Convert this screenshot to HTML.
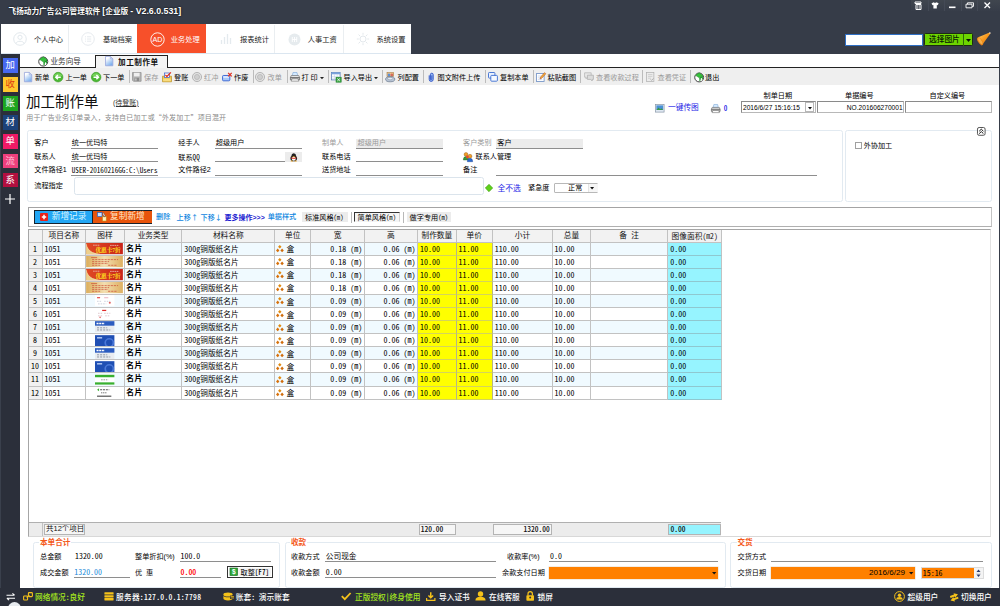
<!DOCTYPE html>
<html lang="zh-CN">
<head>
<meta charset="utf-8">
<title>飞扬动力广告公司管理软件</title>
<style>
html,body{margin:0;padding:0;}
body{width:1000px;height:606px;position:relative;overflow:hidden;background:#fff;
 font-family:"Liberation Sans","Noto Sans CJK SC",sans-serif;font-size:7px;line-height:9px;color:#111;}
.a{position:absolute;white-space:nowrap;}
.t{position:absolute;white-space:nowrap;font-size:7.15px;line-height:9px;color:#000;}
.b{font-weight:bold;}
.md{font-weight:400;}
.sb5{font-weight:500;}
.gray{color:#9a9a9a;}
.blue{color:#1a1ae6;}
.m{font-family:"Noto Sans CJK SC","Liberation Mono",monospace;font-feature-settings:"hwid";font-weight:500;}
.cj{font-family:"Noto Sans CJK SC",sans-serif;}
.ul{position:absolute;height:1px;background:#a4a4a4;}
svg{position:absolute;overflow:visible;}
#titlebar{left:0;top:0;width:1000px;height:54px;background:#363c48;}
#title{left:8.5px;top:5.4px;color:#fff;font-weight:bold;font-size:7.65px;line-height:12px;text-shadow:0 0 2px #000;}
#nav{left:1px;top:24px;width:410px;height:30px;background:#fff;}
.tl{font-size:8.8px;}
.nt{position:absolute;top:0;height:30px;font-size:7.25px;line-height:32.6px;color:#222;}
.nt span{position:absolute;left:33px;top:0;white-space:nowrap;}
.nsep{position:absolute;top:1px;width:1px;height:28px;background:#eaeef1;}
#side{left:0;top:53.5px;width:19.8px;height:536px;background:#2b2f3a;border-left:1px solid #3a404c;box-sizing:border-box;}
.sb{position:absolute;left:2px;width:14.5px;height:14.6px;color:#fff;font-size:9.4px;line-height:14px;text-align:center;}
#status{left:0;top:587.5px;width:1000px;height:19px;background:#2b2f3a;}
.st{font-family:"Noto Sans CJK SC","Liberation Sans",sans-serif;font-feature-settings:"hwid";position:absolute;white-space:nowrap;top:591.8px;font-size:7.7px;line-height:9px;letter-spacing:0;color:#fff;font-weight:500;}
.y{color:#a4e61e !important;}
#tabstrip{left:20px;top:54px;width:980px;height:13px;background:#fff;}
#tabline{left:20px;top:67px;width:980px;height:1px;background:#222;}
#toolbar{left:20px;top:68px;width:980px;height:16.6px;background:#efefef;}
.panel{position:absolute;border:1px solid #e2eaf1;border-radius:2.5px;background:#fff;box-sizing:border-box;}
.box{position:absolute;box-sizing:border-box;border:1px solid #8a8a8a;border-right-color:#b8b8b8;border-bottom-color:#b8b8b8;background:#fff;}
.lg{position:absolute;font-size:7.6px;line-height:9px;font-weight:bold;color:#f4581a;background:#fff;padding:0 1px;white-space:nowrap;}
#grid{left:27.5px;top:228.8px;width:963.8px;height:308px;border:1px solid #a6a6a6;border-right-color:#e2e2e2;border-bottom-color:#d8d8d8;box-sizing:border-box;background:#fff;}
.gh{position:absolute;top:0;height:12.2px;box-sizing:border-box;border-right:1px solid #c2c2c2;border-bottom:1px solid #c2c2c2;background:#f2f2f2;text-align:center;font-size:7.7px;line-height:12.4px;font-weight:400;letter-spacing:0;color:#111;white-space:nowrap;overflow:hidden;}
.c{position:absolute;box-sizing:border-box;border-right:1px solid #c2c2c2;border-bottom:1px solid #c2c2c2;font-size:7.7px;line-height:11px;white-space:nowrap;overflow:hidden;padding-left:1.8px;color:#000;background:#fff;}
.alt{background:#f0faff;}
.yl{background:#ffff00;border-bottom-color:#d4d45c !important;border-right-color:#b4b48a !important;}
.cy{background:#96f4ff;border-bottom-color:#8fc8d0 !important;}
.rn{background:#f1f1f1;text-align:center;padding-left:0;}
.c.m{font-weight:400;font-size:8px;}
.c .m{font-weight:400;font-size:8px;}
.r{text-align:right;padding-right:1.5px;}
</style>
</head>
<body>
<div class="a" id="titlebar"></div>
<div class="a" id="title">飞扬动力广告公司管理软件 <span class="tl">[</span>企业版 <span class="tl">- V2.6.0.531]</span></div>
<div class="a" id="nav">
 <div class="nt" style="left:0;width:67px"><svg style="left:12px;top:8px" width="14" height="14" viewBox="0 0 14 14"><circle cx="7" cy="7" r="6.3" fill="none" stroke="#dfe5ea" stroke-width="0.9"/><circle cx="7" cy="5.3" r="2.1" fill="none" stroke="#dfe5ea" stroke-width="0.9"/><path d="M3 11.5 C3.5 8.5 10.5 8.5 11 11.5" fill="none" stroke="#dfe5ea" stroke-width="0.9"/></svg><span>个人中心</span></div>
 <div class="nsep" style="left:67px"></div>
 <div class="nt" style="left:68px;width:68px"><svg style="left:12px;top:8px" width="14" height="14" viewBox="0 0 14 14"><circle cx="7" cy="7" r="6.3" fill="none" stroke="#e3e8ec" stroke-width="0.9"/><path d="M4 4.8h1M6 4.8h4.2M4 7h1M6 7h4.2M4 9.2h1M6 9.2h4.2" stroke="#e3e8ec" stroke-width="0.9"/></svg><span style="left:34px">基础档案</span></div>
 <div class="nt" style="left:136.2px;width:68.8px;background:#f7502a;color:#fff"><svg style="left:12.5px;top:7.5px" width="15" height="15" viewBox="0 0 15 15"><circle cx="7.5" cy="7.5" r="6.7" fill="none" stroke="#fff" stroke-width="0.9"/><text x="7.5" y="10.1" font-size="7.2" fill="#fff" text-anchor="middle" font-family="Liberation Sans, sans-serif">AD</text></svg><span style="left:33.5px">业务处理</span></div>
 <div class="nt" style="left:205px;width:68px"><svg style="left:14px;top:9px" width="12" height="12" viewBox="0 0 12 12"><path d="M1.5 11V7M4.5 11V4M7.5 11V1M10.5 11V5" stroke="#e4eaee" stroke-width="1.3"/></svg><span style="left:34px">报表统计</span></div>
 <div class="nsep" style="left:273px"></div>
 <div class="nt" style="left:274px;width:68px"><svg style="left:13px;top:8.5px" width="13" height="13" viewBox="0 0 13 13"><circle cx="6.5" cy="6.5" r="6" fill="#e6ebee"/><path d="M4.3 4v5M6.5 4v5M8.7 4v5M4.3 6.5h4.4" stroke="#fff" stroke-width="0.9"/></svg><span style="left:32.8px">人事工资</span></div>
 <div class="nsep" style="left:341.5px"></div>
 <div class="nt" style="left:342px;width:68px"><svg style="left:13px;top:8px" width="14" height="14" viewBox="0 0 14 14"><circle cx="7" cy="7" r="3" fill="none" stroke="#e3e8ec" stroke-width="1"/><path d="M7 0.8v2M7 11.2v2M0.8 7h2M11.2 7h2M2.6 2.6l1.4 1.4M10 10l1.4 1.4M2.6 11.4l1.4-1.4M10 4l1.4-1.4" stroke="#e3e8ec" stroke-width="1"/></svg><span style="left:33.4px">系统设置</span></div>
 <div class="a" style="left:0;top:29px;width:410px;height:1px;background:#dbe6f0"></div>
</div>
<div class="a" style="left:911px;top:0;width:89px;height:10.5px;background:linear-gradient(#40464f,#373d49)"></div><div class="a" style="left:927.6px;top:0;width:1px;height:10.5px;background:#444a56"></div><div class="a" style="left:944.2px;top:0;width:1px;height:10.5px;background:#444a56"></div><div class="a" style="left:960.8px;top:0;width:1px;height:10.5px;background:#444a56"></div><div class="a" style="left:977.4px;top:0;width:1px;height:10.5px;background:#444a56"></div>
<svg style="left:914px;top:1px" width="80" height="10" viewBox="0 0 80 10">
 <path d="M1 1h6v1.5h-6zM2 3.5h5v5h-5z" fill="none" stroke="#fff" stroke-width="1"/><path d="M3.7 4v4M5.3 4v4" stroke="#fff" stroke-width="0.6"/>
 <path d="M17.5 2.5l2-1.2q1.6 1 3.2 0l2 1.2l-1.1 1.8l-0.8-0.4v3.6h-3.4v-3.6l-0.8 0.4z" fill="#fff"/>
 <rect x="35" y="5.5" width="6.5" height="1.6" fill="#fff"/>
 <path d="M52 3.2h6v3.6h-6zM53.5 3.2v-1.4h6v3.6h-1.5" fill="none" stroke="#fff" stroke-width="0.9"/>
 <path d="M70.5 1.5l5.5 5.5M76 1.5l-5.5 5.5" stroke="#fff" stroke-width="1.3"/>
</svg>
<div class="a" style="left:844.5px;top:33.7px;width:78.2px;height:12.4px;background:#fff;border:1px solid #2f6fc4;box-sizing:border-box"></div>
<div class="a" style="left:923.6px;top:33.2px;width:49.6px;height:13.2px;background:#6dd400;border:1px solid #1c2a14;border-radius:1.5px;box-sizing:border-box"></div>
<div class="a" style="left:963.3px;top:34px;width:1px;height:11.6px;background:#2f6a08"></div>
<div class="t" style="left:929px;top:34.5px;font-size:7.7px;font-weight:500;color:#061606">选择图片</div>
<svg style="left:966px;top:38.5px" width="5" height="3" viewBox="0 0 5 3"><path d="M0 0h5l-2.5 3z" fill="#0a140a"/></svg>
<svg style="left:976px;top:31px" width="16" height="16" viewBox="0 0 16 16"><defs><linearGradient id="cg" x1="0" y1="0" x2="1" y2="1"><stop offset="0" stop-color="#ffd070"/><stop offset="0.5" stop-color="#f8981c"/><stop offset="1" stop-color="#d86a0c"/></linearGradient></defs><path d="M13.6 1.4L2.2 6.2Q1 10.5 5.8 14.4L14.4 2.6Q14.4 1.6 13.6 1.4z" fill="url(#cg)"/><ellipse cx="4.1" cy="10.2" rx="2.1" ry="4.5" transform="rotate(-32 4.1 10.2)" fill="#e8841a"/><ellipse cx="4.3" cy="10.1" rx="1.3" ry="3.4" transform="rotate(-32 4.3 10.1)" fill="#f8b048"/><circle cx="13.9" cy="2" r="0.8" fill="#e8e0d8"/></svg>
<div class="a" id="side">
 <div class="sb" style="top:4.5px;background:#4668f0">加</div>
 <div class="sb" style="top:23.5px;background:#ffc82e;color:#e03a12">收</div>
 <div class="sb" style="top:42.7px;background:#1da51f">账</div>
 <div class="sb" style="top:61.8px;background:#1c4279">材</div>
 <div class="sb" style="top:80.9px;background:#f01a66">单</div>
 <div class="sb" style="top:100px;background:#ee3f7d;color:#ffc4da">流</div>
 <div class="sb" style="top:119.1px;background:#b20f3f">系</div>
 <svg style="left:4px;top:140.5px" width="10" height="10" viewBox="0 0 9 9"><path d="M4.5 0v9M0 4.5h9" stroke="#fff" stroke-width="1.1"/></svg>
</div>
<div class="a" id="tabstrip"></div>
<div class="a" id="tabline"></div>
<svg style="left:37.5px;top:55.5px" width="10.5" height="10.5" viewBox="0 0 10 10"><circle cx="5" cy="5.3" r="4.3" fill="#fff" stroke="#333" stroke-width="0.9"/><path d="M1.5 3.2L5 0.8l3.6 2.6l-3.4 2.3z" fill="#35c23a" stroke="#1c7c22" stroke-width="0.5"/><path d="M5.2 5.7l3.4-2.3v3.4l-3.4 2.2z" fill="#1d9a28"/><path d="M6.5 9V6.4l1.2-0.8V8.3z" fill="#fff"/></svg><div class="t" style="left:50.5px;top:57px;font-size:7.6px;line-height:10px;color:#333">业务向导</div>
<div class="a" style="left:94.5px;top:54.5px;width:73px;height:14px;background:#f4f4f4;border:1px solid #222;border-bottom:none;box-sizing:border-box"></div>
<svg style="left:104.5px;top:56.2px" width="8.4" height="10.2" viewBox="0 0 8 10"><defs><linearGradient id="dg" x1="0" y1="0" x2="0.6" y2="1"><stop offset="0.25" stop-color="#ffffff"/><stop offset="1" stop-color="#7db0ee"/></linearGradient></defs><path d="M0.4 0.4h4.8l2.4 2.4v6.8h-7.2z" fill="url(#dg)" stroke="#9aa8dc" stroke-width="0.8"/><path d="M5.2 0.4v2.4h2.4z" fill="#dfe8f8" stroke="#9aa8dc" stroke-width="0.6"/></svg><div class="t b" style="left:118px;top:58.3px;font-size:7.6px;line-height:10px;letter-spacing:0.55px;color:#111">加工制作单</div>
<div class="a" id="toolbar"></div>
<svg style="left:23.8px;top:72.2px" width="8.2" height="10.2" viewBox="0 0 8 10"><defs><linearGradient id="dg" x1="0" y1="0" x2="0.6" y2="1"><stop offset="0.25" stop-color="#ffffff"/><stop offset="1" stop-color="#7db0ee"/></linearGradient></defs><path d="M0.4 0.4h4.8l2.4 2.4v6.8h-7.2z" fill="url(#dg)" stroke="#9aa8dc" stroke-width="0.8"/><path d="M5.2 0.4v2.4h2.4z" fill="#dfe8f8" stroke="#9aa8dc" stroke-width="0.6"/></svg><div class="t md" style="left:35px;top:73.6px">新单</div>
<svg style="left:53.4px;top:72px" width="10.3" height="10.3" viewBox="0 0 9 9"><circle cx="4.5" cy="4.5" r="4.2" fill="#4cb834" stroke="#3a9a26" stroke-width="0.5"/><path d="M1 3.6a3.7 3.7 0 0 1 7 0z" fill="#8adf6c" opacity="0.7"/><path d="M6.8 4.5H2.6M4.3 2.6L2.4 4.5l1.9 1.9" fill="none" stroke="#fff" stroke-width="1.3"/></svg><div class="t md" style="left:65.5px;top:73.6px">上一单</div>
<svg style="left:90.8px;top:72px" width="10.3" height="10.3" viewBox="0 0 9 9"><circle cx="4.5" cy="4.5" r="4.2" fill="#4cb834" stroke="#3a9a26" stroke-width="0.5"/><path d="M1 3.6a3.7 3.7 0 0 1 7 0z" fill="#8adf6c" opacity="0.7"/><path d="M2.2 4.5h4.2M4.7 2.6l1.9 1.9l-1.9 1.9" fill="none" stroke="#fff" stroke-width="1.3"/></svg><div class="t md" style="left:103px;top:73.6px">下一单</div>
<div class="a" style="left:128.5px;top:70px;width:1px;height:13px;background:#bcbcbc"></div>
<svg style="left:131.6px;top:72px" width="9.6" height="9.8" viewBox="0 0 9.6 9.8"><path d="M0.5 0.5h8.6v8.8h-7.6l-1-1z" fill="#b4b4b4" stroke="#8e8e8e" stroke-width="0.7"/><rect x="2" y="0.8" width="5.6" height="3.6" fill="#efefef"/><rect x="2.6" y="5.8" width="4.4" height="3.3" fill="#8a8a8a"/><rect x="3.3" y="6.4" width="1.2" height="2.2" fill="#d8d8d8"/></svg><div class="t gray" style="left:144px;top:73.6px">保存</div>
<svg style="left:162px;top:71.6px" width="10.4" height="10.4" viewBox="0 0 10.4 10.4"><path d="M0.5 4.2h9v5.6h-9z" fill="#f4c84a" stroke="#b8902a" stroke-width="0.7"/><path d="M1.2 6.6h7.6v2.6h-7.6z" fill="#f8dc80"/><rect x="2.4" y="1" width="5" height="4.6" fill="#fff" stroke="#4a6ac8" stroke-width="0.8"/><path d="M3.4 2.8l1.5 1.7l4-4.2" fill="none" stroke="#e02a1a" stroke-width="1.2"/></svg><div class="t md" style="left:174px;top:73.6px">登账</div>
<svg style="left:192.3px;top:72.2px" width="10" height="10" viewBox="0 0 9 9"><circle cx="4.5" cy="4.5" r="4.1" fill="#e2e2e2" stroke="#a8a8a8" stroke-width="0.7"/><circle cx="4.5" cy="4.5" r="2.3" fill="#cfcfcf" stroke="#b0b0b0" stroke-width="0.6"/></svg><div class="t gray" style="left:204px;top:73.6px">红冲</div>
<svg style="left:222px;top:71.8px" width="10.5" height="10" viewBox="0 0 11 10"><rect x="0.6" y="3.4" width="7.6" height="5.6" rx="1" fill="#a8c8f8" stroke="#2a5ad0" stroke-width="0.9"/><rect x="1.4" y="4.2" width="6" height="1.6" fill="#e4f0ff"/><path d="M6.4 0.6l3.8 3.8M10.2 0.6l-3.8 3.8" stroke="#e02a1a" stroke-width="1.2"/></svg><div class="t md" style="left:234px;top:73.6px">作废</div>
<div class="a" style="left:252.5px;top:70px;width:1px;height:13px;background:#bcbcbc"></div>
<svg style="left:255.3px;top:72.2px" width="10" height="10" viewBox="0 0 9 9"><circle cx="4.5" cy="4.5" r="4.1" fill="#e2e2e2" stroke="#a8a8a8" stroke-width="0.7"/><circle cx="4.5" cy="4.5" r="2.3" fill="#cfcfcf" stroke="#b0b0b0" stroke-width="0.6"/></svg><div class="t gray" style="left:267.5px;top:73.6px">改单</div>
<div class="a" style="left:286.5px;top:70px;width:1px;height:13px;background:#bcbcbc"></div>
<svg style="left:289.5px;top:72.3px" width="10" height="9.5" viewBox="0 0 10 9.5"><path d="M3 0.5h4l0.7 3.2h-5.4z" fill="#d4eaff" stroke="#7aa6d6" stroke-width="0.6"/><path d="M1.2 3.6h7.6l0.8 2h-9.2z" fill="#ececec" stroke="#5a5a5a" stroke-width="0.6"/><path d="M0.4 5.6h9.2v2.2h-9.2z" fill="#bdbdbd" stroke="#4a4a4a" stroke-width="0.6"/><path d="M2 6.9h6l0.9 2.2h-7.8z" fill="#fff" stroke="#6a6a6a" stroke-width="0.6"/></svg><div class="t md" style="left:301.5px;top:73.6px">打 印</div>
<svg style="left:319.8px;top:76.8px" width="4" height="2.2" viewBox="0 0 4 2.2"><path d="M0 0h4l-2 2.2z" fill="#222"/></svg><div class="a" style="left:328px;top:70px;width:1px;height:13px;background:#bcbcbc"></div>
<svg style="left:331px;top:71.8px" width="10.5" height="10.5" viewBox="0 0 10.5 10.5"><rect x="0.5" y="0.5" width="8.6" height="7.4" fill="#fff" stroke="#5a7eb8" stroke-width="0.8"/><rect x="0.5" y="0.5" width="8.6" height="1.8" fill="#7aa2dc"/><path d="M0.8 4.4h8M0.8 6.2h8M3.4 2.4v5.4M6.2 2.4v5.4" stroke="#b9cbe6" stroke-width="0.5"/><rect x="5" y="5.2" width="5.2" height="5" fill="#3aa543" stroke="#1d7a2a" stroke-width="0.5"/><path d="M6.3 6.5l2.6 2.5M8.9 6.5l-2.6 2.5" stroke="#fff" stroke-width="0.8"/></svg><div class="t md" style="left:343.5px;top:73.6px">导入导出</div>
<svg style="left:373.6px;top:76.8px" width="4" height="2.2" viewBox="0 0 4 2.2"><path d="M0 0h4l-2 2.2z" fill="#222"/></svg><div class="a" style="left:382px;top:70px;width:1px;height:13px;background:#bcbcbc"></div>
<svg style="left:385px;top:71.8px" width="10.5" height="10.5" viewBox="0 0 10.5 10.5"><rect x="2" y="0.6" width="6.6" height="4" fill="#f3c98a" stroke="#9a6a2a" stroke-width="0.5"/><circle cx="4" cy="3" r="1.4" fill="#5c8fd6"/><circle cx="6.8" cy="3" r="1.4" fill="#d66a5c"/><ellipse cx="5.2" cy="7.2" rx="4.6" ry="2.6" fill="#b8c4d4" stroke="#5a6a80" stroke-width="0.6"/><ellipse cx="5.2" cy="6.6" rx="2.6" ry="1.2" fill="#e8edf4" stroke="#6a7a90" stroke-width="0.4"/></svg><div class="t md" style="left:397.5px;top:73.6px">列配置</div>
<div class="a" style="left:423px;top:70px;width:1px;height:13px;background:#bcbcbc"></div>
<svg style="left:427.5px;top:71.8px" width="6.5" height="10.5" viewBox="0 0 6.5 10.5"><path d="M1.2 3.4v4a2 2 0 0 0 4 0V2.6a1.4 1.4 0 0 0-2.8 0v4.6a0.7 0.7 0 0 0 1.4 0V3.4" fill="#9fc0f5" stroke="#2a4fc4" stroke-width="0.9"/></svg><div class="t md" style="left:437.5px;top:73.6px">图文附件上传</div>
<div class="a" style="left:485px;top:70px;width:1px;height:13px;background:#bcbcbc"></div>
<svg style="left:488px;top:72.3px" width="10" height="10" viewBox="0 0 10 10"><rect x="0.5" y="0.5" width="6.4" height="5.6" rx="0.8" fill="#eaf2ff" stroke="#3a6cd0" stroke-width="0.9"/><rect x="2.8" y="3.4" width="6.6" height="5.8" rx="0.8" fill="#f4f8ff" stroke="#3a6cd0" stroke-width="0.9"/></svg><div class="t md" style="left:500px;top:73.6px">复制本单</div>
<div class="a" style="left:532.5px;top:70px;width:1px;height:13px;background:#bcbcbc"></div>
<svg style="left:536px;top:71.8px" width="10" height="10" viewBox="0 0 10 10"><rect x="0.5" y="1.6" width="7.6" height="7.8" fill="#fff" stroke="#6a8cc4" stroke-width="0.8"/><path d="M1.8 4h4M1.8 5.8h3M1.8 7.6h4.5" stroke="#b7c7e2" stroke-width="0.6"/><path d="M4 7l0.6-2l4-4.4l1.2 1.2l-4 4.4z" fill="#f0b03a" stroke="#b0431c" stroke-width="0.5"/></svg><div class="t md" style="left:547.5px;top:73.6px">粘贴截图</div>
<div class="a" style="left:580px;top:70px;width:1px;height:13px;background:#bcbcbc"></div>
<svg style="left:584px;top:72.3px" width="10" height="9.5" viewBox="0 0 10 9.5"><path d="M0.6 0.8h6.6v4.4h-3.6l-1.6 1.6v-1.6h-1.4z" fill="#e9e9e9" stroke="#b0b0b0" stroke-width="0.7"/><path d="M3.4 3.2h6v4.2h-1.2v1.6l-1.6-1.6h-3.2z" fill="#dcdcdc" stroke="#aaa" stroke-width="0.7"/></svg><div class="t gray" style="left:596px;top:73.6px">查看收款过程</div>
<div class="a" style="left:642px;top:70px;width:1px;height:13px;background:#bcbcbc"></div>
<svg style="left:646px;top:72.3px" width="8.5" height="10" viewBox="0 0 8.5 10"><rect x="0.5" y="0.5" width="7.4" height="9" fill="#ececec" stroke="#aeaeae" stroke-width="0.7"/><path d="M2 2.6h4.4M2 4.4h4.4M2 6.2h3" stroke="#bcbcbc" stroke-width="0.6"/><path d="M4.6 7.4l1 1l1.8-2" fill="none" stroke="#a0a0a0" stroke-width="0.8"/></svg><div class="t gray" style="left:657.5px;top:73.6px">查看凭证</div>
<div class="a" style="left:690px;top:70px;width:1px;height:13px;background:#bcbcbc"></div>
<svg style="left:693.5px;top:71.8px" width="10.3" height="10.3" viewBox="0 0 10 10"><circle cx="5" cy="5.3" r="4.3" fill="#fff" stroke="#333" stroke-width="0.9"/><path d="M1.5 3.2L5 0.8l3.6 2.6l-3.4 2.3z" fill="#35c23a" stroke="#1c7c22" stroke-width="0.5"/><path d="M5.2 5.7l3.4-2.3v3.4l-3.4 2.2z" fill="#1d9a28"/><path d="M6.5 9V6.4l1.2-0.8V8.3z" fill="#fff"/></svg><div class="t md" style="left:705px;top:73.6px">退出</div>
<div class="t" style="left:26px;top:92.8px;font-size:14.5px;line-height:19px;color:#111">加工制作单</div>
<div class="t" style="left:113px;top:97.6px;font-size:7px;line-height:9px;color:#333;text-decoration:underline">(待登账)</div>
<div class="t" style="left:26.3px;top:113px;font-size:7px;line-height:9px;letter-spacing:0.14px;color:#8a8a8a">用于广告业务订单录入，支持自已加工或<span class="cj">“</span>外发加工<span class="cj">”</span>项目混开</div>
<svg style="left:655px;top:103.5px" width="9.5" height="8.5" viewBox="0 0 9.5 8.5"><rect x="0.4" y="0.4" width="8.7" height="7.7" fill="#dfe8f2" stroke="#8a98a8" stroke-width="0.7"/><rect x="1.4" y="1.4" width="6.7" height="4.6" fill="#4a90d6"/><path d="M1.4 6l2.2-2.4l1.6 1.6l1.2-1l1.7 1.8z" fill="#3a9a48"/></svg><div class="t md" style="left:668px;top:103.3px;color:#1a1ae6;font-size:7.7px">一键传图</div>
<svg style="left:711px;top:103.5px" width="9.5" height="9" viewBox="0 0 10 9.5"><path d="M3 0.5h4l0.7 3.2h-5.4z" fill="#d4eaff" stroke="#7aa6d6" stroke-width="0.6"/><path d="M1.2 3.6h7.6l0.8 2h-9.2z" fill="#ececec" stroke="#5a5a5a" stroke-width="0.6"/><path d="M0.4 5.6h9.2v2.2h-9.2z" fill="#bdbdbd" stroke="#4a4a4a" stroke-width="0.6"/><path d="M2 6.9h6l0.9 2.2h-7.8z" fill="#fff" stroke="#6a6a6a" stroke-width="0.6"/></svg><div class="t m" style="left:723.8px;top:103.6px;color:#1a1ae6">0</div>
<div class="t md" style="left:763.5px;top:91.5px">制单日期</div>
<div class="t md" style="left:845px;top:91.5px">单据编号</div>
<div class="t md" style="left:929.5px;top:91.5px">自定义编号</div>
<div class="box" style="left:741px;top:101.2px;width:74.5px;height:11.8px"></div>
<div class="t" style="left:743px;top:103px;font-size:6.6px;line-height:9px">2016/6/27 15:16:15</div>
<div class="a" style="left:805.3px;top:102.4px;width:9.2px;height:9.6px;border:1px solid #b8b8b8;box-sizing:border-box;background:#fff"></div><svg style="left:808px;top:106.5px" width="4" height="2.4" viewBox="0 0 4 2.4"><path d="M0 0h4l-2 2.4z" fill="#111"/></svg>
<div class="box" style="left:816.6px;top:101.2px;width:87.6px;height:11.8px"></div>
<div class="t" style="left:830px;width:72.6px;text-align:right;top:103px;font-size:6.6px;line-height:9px">NO.201606270001</div>
<div class="box" style="left:904.8px;top:101.2px;width:87px;height:11.8px"></div>
<div class="panel" style="left:27px;top:129.5px;width:816px;height:72px"></div>
<div class="panel" style="left:844.6px;top:129.5px;width:147px;height:72px"></div>
<svg style="left:976.6px;top:127px" width="8.6" height="8.8" viewBox="0 0 8.6 8.8"><rect x="0.5" y="0.5" width="7.6" height="7.8" rx="1.6" fill="#fff" stroke="#444" stroke-width="0.9"/><path d="M2.2 4.2l2.1-2l2.1 2M2.2 6.6l2.1-2l2.1 2" fill="none" stroke="#111" stroke-width="1"/></svg>
<div class="a" style="left:855.3px;top:142.4px;width:6.3px;height:6.3px;border:1px solid #a0a0a0;box-sizing:border-box;background:#fff"></div><div class="t md" style="left:863.7px;top:141.8px">外协加工</div>
<div class="t md" style="left:34.3px;top:139px">客户</div>
<div class="t md" style="left:34.3px;top:153px">联系人</div>
<div class="t md" style="left:34.3px;top:166px">文件路径1</div>
<div class="t md" style="left:34.3px;top:182px">流程指定</div>
<div class="t md" style="left:71.8px;top:139px">统一优玛特</div>
<div class="t md" style="left:71.8px;top:153px">统一优玛特</div>
<div class="t m" style="left:71.8px;top:166px;font-weight:400">USER-20160216GG:C:\Users</div>
<div class="ul" style="left:71.3px;top:147.8px;width:86.7px;background:#8e8e8e"></div>
<div class="ul" style="left:71.3px;top:160.7px;width:86.7px;background:#8e8e8e"></div>
<div class="ul" style="left:71.3px;top:174.7px;width:86.7px;background:#8e8e8e"></div>
<div class="t md" style="left:178.3px;top:139px">经手人</div>
<div class="t md" style="left:178.3px;top:153px">联系<span class="m" style="font-weight:400">QQ</span></div>
<div class="t md" style="left:178.3px;top:166px">文件路径2</div>
<div class="t md" style="left:215.8px;top:139px">超级用户</div>
<div class="ul" style="left:215px;top:147.8px;width:87px;background:#8e8e8e"></div>
<div class="ul" style="left:215px;top:160.7px;width:87px;background:#8e8e8e"></div>
<div class="ul" style="left:215px;top:174.7px;width:87px;background:#8e8e8e"></div>
<div class="a" style="left:285px;top:152px;width:17px;height:10.2px;background:#ececec"></div><svg style="left:289.5px;top:152.5px" width="7.5" height="8.5" viewBox="0 0 7.5 8.5"><ellipse cx="3.75" cy="5.4" rx="3.3" ry="2.8" fill="#222"/><ellipse cx="3.75" cy="2.8" rx="2.3" ry="2.5" fill="#222"/><ellipse cx="3.75" cy="5.8" rx="2" ry="2" fill="#fff"/><path d="M1 4.3q2.75 1.4 5.5 0l-0.3 1q-2.45 1-4.9 0z" fill="#e8281a"/><ellipse cx="3.75" cy="3.7" rx="1.2" ry="0.5" fill="#f5a61a"/><ellipse cx="1.8" cy="8" rx="1.2" ry="0.5" fill="#f5a61a"/><ellipse cx="5.7" cy="8" rx="1.2" ry="0.5" fill="#f5a61a"/></svg>
<div class="t gray" style="left:322px;top:139px">制单人</div>
<div class="t md" style="left:322px;top:153px">联系电话</div>
<div class="t md" style="left:322px;top:166px">送货地址</div>
<div class="a" style="left:356.3px;top:138.8px;width:86.7px;height:9.4px;background:#ececec"></div><div class="t gray" style="left:357.5px;top:139px">超级用户</div>
<div class="ul" style="left:356.3px;top:147.8px;width:86.69999999999999px;background:#8e8e8e"></div>
<div class="ul" style="left:356.3px;top:160.7px;width:86.69999999999999px;background:#8e8e8e"></div>
<div class="ul" style="left:356.3px;top:174.7px;width:86.69999999999999px;background:#8e8e8e"></div>
<div class="t gray" style="left:463px;top:139px">客户类别</div>
<div class="a" style="left:496.3px;top:138.8px;width:87px;height:9.4px;background:#ececec"></div><div class="t md" style="left:497.3px;top:139px">客户</div>
<div class="ul" style="left:496.3px;top:147.8px;width:86.99999999999994px;background:#8e8e8e"></div>
<svg style="left:463px;top:151.8px" width="10.5" height="10" viewBox="0 0 10.5 10"><circle cx="3" cy="2.4" r="1.9" fill="#f0a028" stroke="#8a4a10" stroke-width="0.4"/><path d="M0.3 8q0-3.4 2.7-3.4t2.7 3.4z" fill="#3a9a3a" stroke="#1c5c1c" stroke-width="0.4"/><circle cx="7" cy="4.2" r="1.9" fill="#f0a028" stroke="#8a4a10" stroke-width="0.4"/><path d="M4.3 9.7q0-3.4 2.7-3.4t2.7 3.4z" fill="#2a6ad0" stroke="#1c3c8c" stroke-width="0.4"/><circle cx="4.4" cy="5" r="1.4" fill="#e84a2a"/></svg><div class="t md" style="left:475.5px;top:153px">联系人管理</div>
<div class="t md" style="left:463px;top:166px">备注</div>
<div class="ul" style="left:496.3px;top:174.8px;width:320.7px;background:#8e8e8e"></div>
<div class="a" style="left:73.6px;top:177.4px;width:410px;height:17.4px;border:1px solid #dbe4ec;border-radius:2.5px;box-sizing:border-box;background:#fff"></div>
<svg style="left:484.6px;top:183.8px" width="8" height="8" viewBox="0 0 8 8"><path d="M4 0.3L7.7 4L4 7.7L0.3 4z" fill="#5fd01a" stroke="#3a9a0e" stroke-width="0.6"/></svg><div class="t md" style="left:497.4px;top:183.6px;color:#1a1ae6;font-size:7.8px">全不选</div>
<div class="t md" style="left:528px;top:183.8px">紧急度</div>
<div class="box" style="left:554.3px;top:182.8px;width:43.5px;height:10.6px;border-color:#b8b8b8;border-radius:1px"></div><div class="a" style="left:588px;top:183.8px;width:9px;height:8.6px;background:#f6f6f6;border-left:1px solid #e4e4e4"></div><div class="t md" style="left:568px;top:184.2px">正常</div><svg style="left:590px;top:187.3px" width="4.2" height="2.4" viewBox="0 0 4 2.4"><path d="M0 0h4l-2 2.4z" fill="#111"/></svg>
<div class="a" style="left:27.5px;top:207.3px;width:964.5px;height:20px;border:1px solid #a4a4a4;border-right-color:#c4c4c4;border-bottom-color:#b0b0b0;box-sizing:border-box;background:#fff"></div>
<div class="a" style="left:34px;top:210px;width:118.4px;height:13.8px;background:#16222e"></div><div class="a" style="left:34.8px;top:210.8px;width:57.4px;height:12.2px;background:#22a6f4"></div><svg style="left:39.8px;top:213px" width="8" height="8" viewBox="0 0 8 8"><rect width="8" height="8" rx="1" fill="#e8221a"/><path d="M4 1.8v4.4M1.8 4h4.4" stroke="#fff" stroke-width="1.5"/></svg><div class="t" style="left:51.7px;top:211.2px;font-size:8.7px;line-height:11px;color:#d8f6ff">新增记录</div>
<div class="a" style="left:92.6px;top:210.8px;width:59px;height:12.2px;background:#e8540c"></div><svg style="left:97.4px;top:212.3px" width="10" height="9.5" viewBox="0 0 10 9.5"><rect x="0.4" y="0.6" width="4.6" height="4" fill="#cfe4ff" stroke="#2a62c0" stroke-width="0.7"/><rect x="5.6" y="4.6" width="3.6" height="4.4" fill="#fff3c0" stroke="#c8901a" stroke-width="0.6"/><path d="M6.6 0.8l1.8 3.4l-1-0.2l-0.2 1.2l-1.4-3.4z" fill="#fff" stroke="#333" stroke-width="0.4"/></svg><div class="t" style="left:110px;top:211.2px;font-size:8.7px;line-height:11px;color:#ffe6c8">复制新增</div>
<div class="t md" style="left:156px;top:212.6px;color:#0f86e0;font-weight:500">删除</div>
<div class="t md" style="left:176.6px;top:212.6px;color:#0f86e0;font-weight:500">上移<span class="cj">↑</span></div>
<div class="t md" style="left:200.5px;top:212.6px;color:#0f86e0;font-weight:500">下移<span class="cj">↓</span></div>
<div class="t b" style="left:224.5px;top:212.6px;color:#1a1ad0;font-size:7px">更多操作&gt;&gt;&gt;</div>
<div class="t md" style="left:267.7px;top:212.6px;color:#0f86e0;font-weight:500">单据样式</div>
<div class="a" style="left:301.5px;top:212px;width:46.2px;height:9.8px;background:#ececec"></div><div class="t md" style="left:305px;top:212.6px">标准风格<span class="m" style="font-weight:400;font-size:6.6px">(m)</span></div>
<div class="a" style="left:351px;top:211.5px;width:1px;height:11px;background:#b8b8b8"></div><div class="a" style="left:354px;top:211.6px;width:45.8px;height:10.4px;background:#f4f4f4;border:1px solid #333;border-right-color:#d0d0d0;border-bottom-color:#f4f4f4;box-sizing:border-box"></div><div class="t md" style="left:357.5px;top:212.6px">简单风格<span class="m" style="font-weight:400;font-size:6.6px">(m)</span></div>
<div class="a" style="left:403.4px;top:211.5px;width:1px;height:11px;background:#b8b8b8"></div><div class="a" style="left:407px;top:212px;width:44.4px;height:9.8px;background:#ececec"></div><div class="t md" style="left:409.6px;top:212.6px">做字专用<span class="m" style="font-weight:400;font-size:6.6px">(m)</span></div>
<div class="a" id="grid">
<div class="gh" style="left:0.0px;width:14.2px;height:12.8px"></div>
<div class="gh" style="left:14.2px;width:43.5px;height:12.8px">项目名称</div>
<div class="gh" style="left:57.7px;width:38.5px;height:12.8px">图样</div>
<div class="gh" style="left:96.2px;width:57.7px;height:12.8px">业务类型</div>
<div class="gh" style="left:153.9px;width:92.8px;height:12.8px">材料名称</div>
<div class="gh" style="left:246.7px;width:36.0px;height:12.8px">单位</div>
<div class="gh" style="left:282.7px;width:53.6px;height:12.8px">宽</div>
<div class="gh" style="left:336.3px;width:53.3px;height:12.8px">高</div>
<div class="gh" style="left:389.6px;width:38.5px;height:12.8px">制作数量</div>
<div class="gh" style="left:428.1px;width:36.4px;height:12.8px">单价</div>
<div class="gh" style="left:464.5px;width:59.8px;height:12.8px">小计</div>
<div class="gh" style="left:524.3px;width:38.2px;height:12.8px">总量</div>
<div class="gh" style="left:562.5px;width:77.4px;height:12.8px">备&nbsp;&nbsp;注</div>
<div class="gh" style="left:639.9px;width:53.6px;height:12.8px">图像面积<span class="m" style="font-weight:400">(m2)</span></div>
<div class="c rn m" style="left:0.0px;top:12.80px;width:14.2px;height:13.09px;">1</div>
<div class="c m alt" style="left:14.2px;top:12.80px;width:43.5px;height:13.09px;">1051</div>
<div class="c  alt" style="left:57.7px;top:12.80px;width:38.5px;height:13.09px;padding:0;"><svg style="left:-0.3px;top:0.3px" width="37" height="11.2" viewBox="0 0 36.8 11.2"><defs><linearGradient id="rg" x1="0" y1="0" x2="1" y2="0"><stop offset="0" stop-color="#e04a24"/><stop offset="1" stop-color="#c8241a"/></linearGradient></defs><rect width="36.8" height="11.2" fill="url(#rg)"/><path d="M0 1q1.2 6 6.5 8.6q3.4 1.4 7.5 1.6H0z" fill="#ecd08c"/><path d="M0 1q1.2 6 6.5 8.6q3.4 1.4 7.5 1.6" fill="none" stroke="#f6e8b8" stroke-width="0.6"/><path d="M7 2.2h7M24 2.4h9" stroke="#f6d8d0" stroke-width="0.7" stroke-dasharray="1.6 0.6"/><text x="22" y="9" font-size="5.6" font-weight="bold" fill="#ffe020" text-anchor="middle" font-family="Liberation Serif, Noto Serif CJK SC, serif">优惠卡7折</text></svg></div>
<div class="c b alt" style="left:96.2px;top:12.80px;width:57.7px;height:13.09px;font-size:7.8px;letter-spacing:0.3px;line-height:11px;padding-left:1.6px;">名片</div>
<div class="c  alt" style="left:153.9px;top:12.80px;width:92.8px;height:13.09px;"><span class="m">300g</span>铜版纸名片</div>
<div class="c  alt" style="left:246.7px;top:12.80px;width:36.0px;height:13.09px;"><svg style="left:1px;top:2.4px" width="8" height="8" viewBox="0 0 8 8"><path d="M3.8 0l1.7 1.7l-1.7 1.7l-1.7-1.7z" fill="#e08a10"/><path d="M1.7 3.6l1.7 1.8l-1.7 1.8l-1.7-1.8z" fill="#d8720c"/><path d="M6.1 3.6l1.7 1.8l-1.7 1.8l-1.7-1.8z" fill="#d06c0c"/></svg><span style="position:absolute;left:11.2px;top:1.6px">盒</span></div>
<div class="c m r alt" style="left:282.7px;top:12.80px;width:53.6px;height:13.09px;">0.18 (m)</div>
<div class="c m r alt" style="left:336.3px;top:12.80px;width:53.3px;height:13.09px;">0.06 (m)</div>
<div class="c m yl" style="left:389.6px;top:12.80px;width:38.5px;height:13.09px;">10.00</div>
<div class="c m yl" style="left:428.1px;top:12.80px;width:36.4px;height:13.09px;">11.00</div>
<div class="c m alt" style="left:464.5px;top:12.80px;width:59.8px;height:13.09px;">110.00</div>
<div class="c m alt" style="left:524.3px;top:12.80px;width:38.2px;height:13.09px;">10.00</div>
<div class="c  alt" style="left:562.5px;top:12.80px;width:77.4px;height:13.09px;"></div>
<div class="c m cy" style="left:639.9px;top:12.80px;width:53.6px;height:13.09px;">0.00</div>
<div class="c rn m" style="left:0.0px;top:25.89px;width:14.2px;height:13.09px;">2</div>
<div class="c m" style="left:14.2px;top:25.89px;width:43.5px;height:13.09px;">1051</div>
<div class="c " style="left:57.7px;top:25.89px;width:38.5px;height:13.09px;padding:0;"><svg style="left:-0.3px;top:0.3px" width="37" height="11.2" viewBox="0 0 36.8 11.2"><defs><linearGradient id="gg" x1="0" y1="0" x2="1" y2="0"><stop offset="0" stop-color="#dcae5c"/><stop offset="0.5" stop-color="#f3deb0"/><stop offset="1" stop-color="#deb062"/></linearGradient></defs><rect width="36.8" height="11.2" fill="url(#gg)"/><path d="M5 1.6h6" stroke="#c84a30" stroke-width="0.7"/><path d="M6 3.6h26M6 5.6h17M6 7.4h16M6 9.3h8M22 9.3h9" stroke="#cc4a34" stroke-width="0.7" stroke-dasharray="2.2 0.9"/></svg></div>
<div class="c b" style="left:96.2px;top:25.89px;width:57.7px;height:13.09px;font-size:7.8px;letter-spacing:0.3px;line-height:11px;padding-left:1.6px;">名片</div>
<div class="c " style="left:153.9px;top:25.89px;width:92.8px;height:13.09px;"><span class="m">300g</span>铜版纸名片</div>
<div class="c " style="left:246.7px;top:25.89px;width:36.0px;height:13.09px;"><svg style="left:1px;top:2.4px" width="8" height="8" viewBox="0 0 8 8"><path d="M3.8 0l1.7 1.7l-1.7 1.7l-1.7-1.7z" fill="#e08a10"/><path d="M1.7 3.6l1.7 1.8l-1.7 1.8l-1.7-1.8z" fill="#d8720c"/><path d="M6.1 3.6l1.7 1.8l-1.7 1.8l-1.7-1.8z" fill="#d06c0c"/></svg><span style="position:absolute;left:11.2px;top:1.6px">盒</span></div>
<div class="c m r" style="left:282.7px;top:25.89px;width:53.6px;height:13.09px;">0.18 (m)</div>
<div class="c m r" style="left:336.3px;top:25.89px;width:53.3px;height:13.09px;">0.06 (m)</div>
<div class="c m yl" style="left:389.6px;top:25.89px;width:38.5px;height:13.09px;">10.00</div>
<div class="c m yl" style="left:428.1px;top:25.89px;width:36.4px;height:13.09px;">11.00</div>
<div class="c m" style="left:464.5px;top:25.89px;width:59.8px;height:13.09px;">110.00</div>
<div class="c m" style="left:524.3px;top:25.89px;width:38.2px;height:13.09px;">10.00</div>
<div class="c " style="left:562.5px;top:25.89px;width:77.4px;height:13.09px;"></div>
<div class="c m cy" style="left:639.9px;top:25.89px;width:53.6px;height:13.09px;">0.00</div>
<div class="c rn m" style="left:0.0px;top:38.98px;width:14.2px;height:13.09px;">3</div>
<div class="c m alt" style="left:14.2px;top:38.98px;width:43.5px;height:13.09px;">1051</div>
<div class="c  alt" style="left:57.7px;top:38.98px;width:38.5px;height:13.09px;padding:0;"><svg style="left:-0.3px;top:0.3px" width="37" height="11.2" viewBox="0 0 36.8 11.2"><defs><linearGradient id="rg" x1="0" y1="0" x2="1" y2="0"><stop offset="0" stop-color="#e04a24"/><stop offset="1" stop-color="#c8241a"/></linearGradient></defs><rect width="36.8" height="11.2" fill="url(#rg)"/><path d="M0 1q1.2 6 6.5 8.6q3.4 1.4 7.5 1.6H0z" fill="#ecd08c"/><path d="M0 1q1.2 6 6.5 8.6q3.4 1.4 7.5 1.6" fill="none" stroke="#f6e8b8" stroke-width="0.6"/><path d="M7 2.2h7M24 2.4h9" stroke="#f6d8d0" stroke-width="0.7" stroke-dasharray="1.6 0.6"/><text x="22" y="9" font-size="5.6" font-weight="bold" fill="#ffe020" text-anchor="middle" font-family="Liberation Serif, Noto Serif CJK SC, serif">优惠卡7折</text></svg></div>
<div class="c b alt" style="left:96.2px;top:38.98px;width:57.7px;height:13.09px;font-size:7.8px;letter-spacing:0.3px;line-height:11px;padding-left:1.6px;">名片</div>
<div class="c  alt" style="left:153.9px;top:38.98px;width:92.8px;height:13.09px;"><span class="m">300g</span>铜版纸名片</div>
<div class="c  alt" style="left:246.7px;top:38.98px;width:36.0px;height:13.09px;"><svg style="left:1px;top:2.4px" width="8" height="8" viewBox="0 0 8 8"><path d="M3.8 0l1.7 1.7l-1.7 1.7l-1.7-1.7z" fill="#e08a10"/><path d="M1.7 3.6l1.7 1.8l-1.7 1.8l-1.7-1.8z" fill="#d8720c"/><path d="M6.1 3.6l1.7 1.8l-1.7 1.8l-1.7-1.8z" fill="#d06c0c"/></svg><span style="position:absolute;left:11.2px;top:1.6px">盒</span></div>
<div class="c m r alt" style="left:282.7px;top:38.98px;width:53.6px;height:13.09px;">0.18 (m)</div>
<div class="c m r alt" style="left:336.3px;top:38.98px;width:53.3px;height:13.09px;">0.06 (m)</div>
<div class="c m yl" style="left:389.6px;top:38.98px;width:38.5px;height:13.09px;">10.00</div>
<div class="c m yl" style="left:428.1px;top:38.98px;width:36.4px;height:13.09px;">11.00</div>
<div class="c m alt" style="left:464.5px;top:38.98px;width:59.8px;height:13.09px;">110.00</div>
<div class="c m alt" style="left:524.3px;top:38.98px;width:38.2px;height:13.09px;">10.00</div>
<div class="c  alt" style="left:562.5px;top:38.98px;width:77.4px;height:13.09px;"></div>
<div class="c m cy" style="left:639.9px;top:38.98px;width:53.6px;height:13.09px;">0.00</div>
<div class="c rn m" style="left:0.0px;top:52.07px;width:14.2px;height:13.09px;">4</div>
<div class="c m" style="left:14.2px;top:52.07px;width:43.5px;height:13.09px;">1051</div>
<div class="c " style="left:57.7px;top:52.07px;width:38.5px;height:13.09px;padding:0;"><svg style="left:-0.3px;top:0.3px" width="37" height="11.2" viewBox="0 0 36.8 11.2"><defs><linearGradient id="gg" x1="0" y1="0" x2="1" y2="0"><stop offset="0" stop-color="#dcae5c"/><stop offset="0.5" stop-color="#f3deb0"/><stop offset="1" stop-color="#deb062"/></linearGradient></defs><rect width="36.8" height="11.2" fill="url(#gg)"/><path d="M5 1.6h6" stroke="#c84a30" stroke-width="0.7"/><path d="M6 3.6h26M6 5.6h17M6 7.4h16M6 9.3h8M22 9.3h9" stroke="#cc4a34" stroke-width="0.7" stroke-dasharray="2.2 0.9"/></svg></div>
<div class="c b" style="left:96.2px;top:52.07px;width:57.7px;height:13.09px;font-size:7.8px;letter-spacing:0.3px;line-height:11px;padding-left:1.6px;">名片</div>
<div class="c " style="left:153.9px;top:52.07px;width:92.8px;height:13.09px;"><span class="m">300g</span>铜版纸名片</div>
<div class="c " style="left:246.7px;top:52.07px;width:36.0px;height:13.09px;"><svg style="left:1px;top:2.4px" width="8" height="8" viewBox="0 0 8 8"><path d="M3.8 0l1.7 1.7l-1.7 1.7l-1.7-1.7z" fill="#e08a10"/><path d="M1.7 3.6l1.7 1.8l-1.7 1.8l-1.7-1.8z" fill="#d8720c"/><path d="M6.1 3.6l1.7 1.8l-1.7 1.8l-1.7-1.8z" fill="#d06c0c"/></svg><span style="position:absolute;left:11.2px;top:1.6px">盒</span></div>
<div class="c m r" style="left:282.7px;top:52.07px;width:53.6px;height:13.09px;">0.18 (m)</div>
<div class="c m r" style="left:336.3px;top:52.07px;width:53.3px;height:13.09px;">0.06 (m)</div>
<div class="c m yl" style="left:389.6px;top:52.07px;width:38.5px;height:13.09px;">10.00</div>
<div class="c m yl" style="left:428.1px;top:52.07px;width:36.4px;height:13.09px;">11.00</div>
<div class="c m" style="left:464.5px;top:52.07px;width:59.8px;height:13.09px;">110.00</div>
<div class="c m" style="left:524.3px;top:52.07px;width:38.2px;height:13.09px;">10.00</div>
<div class="c " style="left:562.5px;top:52.07px;width:77.4px;height:13.09px;"></div>
<div class="c m cy" style="left:639.9px;top:52.07px;width:53.6px;height:13.09px;">0.00</div>
<div class="c rn m" style="left:0.0px;top:65.16px;width:14.2px;height:13.09px;">5</div>
<div class="c m alt" style="left:14.2px;top:65.16px;width:43.5px;height:13.09px;">1051</div>
<div class="c  alt" style="left:57.7px;top:65.16px;width:38.5px;height:13.09px;padding:0;"><svg style="left:8.8px;top:0.3px" width="19.4" height="11.2" viewBox="0 0 19 10.6"><rect width="19" height="10.6" fill="#fff"/><path d="M2 2.5h3" stroke="#e02a2a" stroke-width="1"/><path d="M9 2.5h4" stroke="#e8a0b0" stroke-width="0.8"/><path d="M2 6h5M9 6h6M3 8.5h8" stroke="#b8c0d0" stroke-width="0.7" stroke-dasharray="1.5 1"/><circle cx="14.5" cy="7.5" r="1" fill="#e06060"/></svg></div>
<div class="c b alt" style="left:96.2px;top:65.16px;width:57.7px;height:13.09px;font-size:7.8px;letter-spacing:0.3px;line-height:11px;padding-left:1.6px;">名片</div>
<div class="c  alt" style="left:153.9px;top:65.16px;width:92.8px;height:13.09px;"><span class="m">300g</span>铜版纸名片</div>
<div class="c  alt" style="left:246.7px;top:65.16px;width:36.0px;height:13.09px;"><svg style="left:1px;top:2.4px" width="8" height="8" viewBox="0 0 8 8"><path d="M3.8 0l1.7 1.7l-1.7 1.7l-1.7-1.7z" fill="#e08a10"/><path d="M1.7 3.6l1.7 1.8l-1.7 1.8l-1.7-1.8z" fill="#d8720c"/><path d="M6.1 3.6l1.7 1.8l-1.7 1.8l-1.7-1.8z" fill="#d06c0c"/></svg><span style="position:absolute;left:11.2px;top:1.6px">盒</span></div>
<div class="c m r alt" style="left:282.7px;top:65.16px;width:53.6px;height:13.09px;">0.09 (m)</div>
<div class="c m r alt" style="left:336.3px;top:65.16px;width:53.3px;height:13.09px;">0.06 (m)</div>
<div class="c m yl" style="left:389.6px;top:65.16px;width:38.5px;height:13.09px;">10.00</div>
<div class="c m yl" style="left:428.1px;top:65.16px;width:36.4px;height:13.09px;">11.00</div>
<div class="c m alt" style="left:464.5px;top:65.16px;width:59.8px;height:13.09px;">110.00</div>
<div class="c m alt" style="left:524.3px;top:65.16px;width:38.2px;height:13.09px;">10.00</div>
<div class="c  alt" style="left:562.5px;top:65.16px;width:77.4px;height:13.09px;"></div>
<div class="c m cy" style="left:639.9px;top:65.16px;width:53.6px;height:13.09px;">0.00</div>
<div class="c rn m" style="left:0.0px;top:78.25px;width:14.2px;height:13.09px;">6</div>
<div class="c m" style="left:14.2px;top:78.25px;width:43.5px;height:13.09px;">1051</div>
<div class="c " style="left:57.7px;top:78.25px;width:38.5px;height:13.09px;padding:0;"><svg style="left:8.8px;top:0.3px" width="19.4" height="11.2" viewBox="0 0 19 10.6"><rect width="19" height="10.6" fill="#fff"/><path d="M7 2.2h4" stroke="#e02a2a" stroke-width="1.2"/><path d="M3 5h4M9 5h6M3 7.5h5M10 7.5h5" stroke="#d0b0b8" stroke-width="0.7" stroke-dasharray="1.5 1"/><circle cx="5" cy="9" r="0.8" fill="#e06060"/></svg></div>
<div class="c b" style="left:96.2px;top:78.25px;width:57.7px;height:13.09px;font-size:7.8px;letter-spacing:0.3px;line-height:11px;padding-left:1.6px;">名片</div>
<div class="c " style="left:153.9px;top:78.25px;width:92.8px;height:13.09px;"><span class="m">300g</span>铜版纸名片</div>
<div class="c " style="left:246.7px;top:78.25px;width:36.0px;height:13.09px;"><svg style="left:1px;top:2.4px" width="8" height="8" viewBox="0 0 8 8"><path d="M3.8 0l1.7 1.7l-1.7 1.7l-1.7-1.7z" fill="#e08a10"/><path d="M1.7 3.6l1.7 1.8l-1.7 1.8l-1.7-1.8z" fill="#d8720c"/><path d="M6.1 3.6l1.7 1.8l-1.7 1.8l-1.7-1.8z" fill="#d06c0c"/></svg><span style="position:absolute;left:11.2px;top:1.6px">盒</span></div>
<div class="c m r" style="left:282.7px;top:78.25px;width:53.6px;height:13.09px;">0.09 (m)</div>
<div class="c m r" style="left:336.3px;top:78.25px;width:53.3px;height:13.09px;">0.06 (m)</div>
<div class="c m yl" style="left:389.6px;top:78.25px;width:38.5px;height:13.09px;">10.00</div>
<div class="c m yl" style="left:428.1px;top:78.25px;width:36.4px;height:13.09px;">11.00</div>
<div class="c m" style="left:464.5px;top:78.25px;width:59.8px;height:13.09px;">110.00</div>
<div class="c m" style="left:524.3px;top:78.25px;width:38.2px;height:13.09px;">10.00</div>
<div class="c " style="left:562.5px;top:78.25px;width:77.4px;height:13.09px;"></div>
<div class="c m cy" style="left:639.9px;top:78.25px;width:53.6px;height:13.09px;">0.00</div>
<div class="c rn m" style="left:0.0px;top:91.34px;width:14.2px;height:13.09px;">7</div>
<div class="c m alt" style="left:14.2px;top:91.34px;width:43.5px;height:13.09px;">1051</div>
<div class="c  alt" style="left:57.7px;top:91.34px;width:38.5px;height:13.09px;padding:0;"><svg style="left:8.8px;top:0.3px" width="19.4" height="11.2" viewBox="0 0 19 10.6"><rect width="19" height="10.6" fill="#e8ecf0"/><rect width="19" height="4.4" fill="#2a5cc0"/><path d="M1.5 2.2h8" stroke="#fff" stroke-width="1.4" stroke-dasharray="2 0.6"/><path d="M2 6.5h10M2 8.6h13" stroke="#7a8494" stroke-width="0.8" stroke-dasharray="2 1"/></svg></div>
<div class="c b alt" style="left:96.2px;top:91.34px;width:57.7px;height:13.09px;font-size:7.8px;letter-spacing:0.3px;line-height:11px;padding-left:1.6px;">名片</div>
<div class="c  alt" style="left:153.9px;top:91.34px;width:92.8px;height:13.09px;"><span class="m">300g</span>铜版纸名片</div>
<div class="c  alt" style="left:246.7px;top:91.34px;width:36.0px;height:13.09px;"><svg style="left:1px;top:2.4px" width="8" height="8" viewBox="0 0 8 8"><path d="M3.8 0l1.7 1.7l-1.7 1.7l-1.7-1.7z" fill="#e08a10"/><path d="M1.7 3.6l1.7 1.8l-1.7 1.8l-1.7-1.8z" fill="#d8720c"/><path d="M6.1 3.6l1.7 1.8l-1.7 1.8l-1.7-1.8z" fill="#d06c0c"/></svg><span style="position:absolute;left:11.2px;top:1.6px">盒</span></div>
<div class="c m r alt" style="left:282.7px;top:91.34px;width:53.6px;height:13.09px;">0.09 (m)</div>
<div class="c m r alt" style="left:336.3px;top:91.34px;width:53.3px;height:13.09px;">0.06 (m)</div>
<div class="c m yl" style="left:389.6px;top:91.34px;width:38.5px;height:13.09px;">10.00</div>
<div class="c m yl" style="left:428.1px;top:91.34px;width:36.4px;height:13.09px;">11.00</div>
<div class="c m alt" style="left:464.5px;top:91.34px;width:59.8px;height:13.09px;">110.00</div>
<div class="c m alt" style="left:524.3px;top:91.34px;width:38.2px;height:13.09px;">10.00</div>
<div class="c  alt" style="left:562.5px;top:91.34px;width:77.4px;height:13.09px;"></div>
<div class="c m cy" style="left:639.9px;top:91.34px;width:53.6px;height:13.09px;">0.00</div>
<div class="c rn m" style="left:0.0px;top:104.43px;width:14.2px;height:13.09px;">8</div>
<div class="c m" style="left:14.2px;top:104.43px;width:43.5px;height:13.09px;">1051</div>
<div class="c " style="left:57.7px;top:104.43px;width:38.5px;height:13.09px;padding:0;"><svg style="left:8.8px;top:0.3px" width="19.4" height="11.2" viewBox="0 0 19 10.6"><rect width="19" height="10.6" fill="#1f4fb4"/><circle cx="14" cy="7.5" r="4" fill="none" stroke="#4a78d8" stroke-width="1.6"/><path d="M2 2.6h5" stroke="#cfe0ff" stroke-width="1.2"/></svg></div>
<div class="c b" style="left:96.2px;top:104.43px;width:57.7px;height:13.09px;font-size:7.8px;letter-spacing:0.3px;line-height:11px;padding-left:1.6px;">名片</div>
<div class="c " style="left:153.9px;top:104.43px;width:92.8px;height:13.09px;"><span class="m">300g</span>铜版纸名片</div>
<div class="c " style="left:246.7px;top:104.43px;width:36.0px;height:13.09px;"><svg style="left:1px;top:2.4px" width="8" height="8" viewBox="0 0 8 8"><path d="M3.8 0l1.7 1.7l-1.7 1.7l-1.7-1.7z" fill="#e08a10"/><path d="M1.7 3.6l1.7 1.8l-1.7 1.8l-1.7-1.8z" fill="#d8720c"/><path d="M6.1 3.6l1.7 1.8l-1.7 1.8l-1.7-1.8z" fill="#d06c0c"/></svg><span style="position:absolute;left:11.2px;top:1.6px">盒</span></div>
<div class="c m r" style="left:282.7px;top:104.43px;width:53.6px;height:13.09px;">0.09 (m)</div>
<div class="c m r" style="left:336.3px;top:104.43px;width:53.3px;height:13.09px;">0.06 (m)</div>
<div class="c m yl" style="left:389.6px;top:104.43px;width:38.5px;height:13.09px;">10.00</div>
<div class="c m yl" style="left:428.1px;top:104.43px;width:36.4px;height:13.09px;">11.00</div>
<div class="c m" style="left:464.5px;top:104.43px;width:59.8px;height:13.09px;">110.00</div>
<div class="c m" style="left:524.3px;top:104.43px;width:38.2px;height:13.09px;">10.00</div>
<div class="c " style="left:562.5px;top:104.43px;width:77.4px;height:13.09px;"></div>
<div class="c m cy" style="left:639.9px;top:104.43px;width:53.6px;height:13.09px;">0.00</div>
<div class="c rn m" style="left:0.0px;top:117.52px;width:14.2px;height:13.09px;">9</div>
<div class="c m alt" style="left:14.2px;top:117.52px;width:43.5px;height:13.09px;">1051</div>
<div class="c  alt" style="left:57.7px;top:117.52px;width:38.5px;height:13.09px;padding:0;"><svg style="left:8.8px;top:0.3px" width="19.4" height="11.2" viewBox="0 0 19 10.6"><rect width="19" height="10.6" fill="#e8ecf0"/><rect width="19" height="4.4" fill="#2a5cc0"/><path d="M1.5 2.2h8" stroke="#fff" stroke-width="1.4" stroke-dasharray="2 0.6"/><path d="M2 6.5h10M2 8.6h13" stroke="#7a8494" stroke-width="0.8" stroke-dasharray="2 1"/></svg></div>
<div class="c b alt" style="left:96.2px;top:117.52px;width:57.7px;height:13.09px;font-size:7.8px;letter-spacing:0.3px;line-height:11px;padding-left:1.6px;">名片</div>
<div class="c  alt" style="left:153.9px;top:117.52px;width:92.8px;height:13.09px;"><span class="m">300g</span>铜版纸名片</div>
<div class="c  alt" style="left:246.7px;top:117.52px;width:36.0px;height:13.09px;"><svg style="left:1px;top:2.4px" width="8" height="8" viewBox="0 0 8 8"><path d="M3.8 0l1.7 1.7l-1.7 1.7l-1.7-1.7z" fill="#e08a10"/><path d="M1.7 3.6l1.7 1.8l-1.7 1.8l-1.7-1.8z" fill="#d8720c"/><path d="M6.1 3.6l1.7 1.8l-1.7 1.8l-1.7-1.8z" fill="#d06c0c"/></svg><span style="position:absolute;left:11.2px;top:1.6px">盒</span></div>
<div class="c m r alt" style="left:282.7px;top:117.52px;width:53.6px;height:13.09px;">0.09 (m)</div>
<div class="c m r alt" style="left:336.3px;top:117.52px;width:53.3px;height:13.09px;">0.06 (m)</div>
<div class="c m yl" style="left:389.6px;top:117.52px;width:38.5px;height:13.09px;">10.00</div>
<div class="c m yl" style="left:428.1px;top:117.52px;width:36.4px;height:13.09px;">11.00</div>
<div class="c m alt" style="left:464.5px;top:117.52px;width:59.8px;height:13.09px;">110.00</div>
<div class="c m alt" style="left:524.3px;top:117.52px;width:38.2px;height:13.09px;">10.00</div>
<div class="c  alt" style="left:562.5px;top:117.52px;width:77.4px;height:13.09px;"></div>
<div class="c m cy" style="left:639.9px;top:117.52px;width:53.6px;height:13.09px;">0.00</div>
<div class="c rn m" style="left:0.0px;top:130.61px;width:14.2px;height:13.09px;">10</div>
<div class="c m" style="left:14.2px;top:130.61px;width:43.5px;height:13.09px;">1051</div>
<div class="c " style="left:57.7px;top:130.61px;width:38.5px;height:13.09px;padding:0;"><svg style="left:8.8px;top:0.3px" width="19.4" height="11.2" viewBox="0 0 19 10.6"><rect width="19" height="10.6" fill="#1f4fb4"/><circle cx="14" cy="7.5" r="4" fill="none" stroke="#4a78d8" stroke-width="1.6"/><path d="M2 2.6h5" stroke="#cfe0ff" stroke-width="1.2"/></svg></div>
<div class="c b" style="left:96.2px;top:130.61px;width:57.7px;height:13.09px;font-size:7.8px;letter-spacing:0.3px;line-height:11px;padding-left:1.6px;">名片</div>
<div class="c " style="left:153.9px;top:130.61px;width:92.8px;height:13.09px;"><span class="m">300g</span>铜版纸名片</div>
<div class="c " style="left:246.7px;top:130.61px;width:36.0px;height:13.09px;"><svg style="left:1px;top:2.4px" width="8" height="8" viewBox="0 0 8 8"><path d="M3.8 0l1.7 1.7l-1.7 1.7l-1.7-1.7z" fill="#e08a10"/><path d="M1.7 3.6l1.7 1.8l-1.7 1.8l-1.7-1.8z" fill="#d8720c"/><path d="M6.1 3.6l1.7 1.8l-1.7 1.8l-1.7-1.8z" fill="#d06c0c"/></svg><span style="position:absolute;left:11.2px;top:1.6px">盒</span></div>
<div class="c m r" style="left:282.7px;top:130.61px;width:53.6px;height:13.09px;">0.09 (m)</div>
<div class="c m r" style="left:336.3px;top:130.61px;width:53.3px;height:13.09px;">0.06 (m)</div>
<div class="c m yl" style="left:389.6px;top:130.61px;width:38.5px;height:13.09px;">10.00</div>
<div class="c m yl" style="left:428.1px;top:130.61px;width:36.4px;height:13.09px;">11.00</div>
<div class="c m" style="left:464.5px;top:130.61px;width:59.8px;height:13.09px;">110.00</div>
<div class="c m" style="left:524.3px;top:130.61px;width:38.2px;height:13.09px;">10.00</div>
<div class="c " style="left:562.5px;top:130.61px;width:77.4px;height:13.09px;"></div>
<div class="c m cy" style="left:639.9px;top:130.61px;width:53.6px;height:13.09px;">0.00</div>
<div class="c rn m" style="left:0.0px;top:143.70px;width:14.2px;height:13.09px;">11</div>
<div class="c m alt" style="left:14.2px;top:143.70px;width:43.5px;height:13.09px;">1051</div>
<div class="c  alt" style="left:57.7px;top:143.70px;width:38.5px;height:13.09px;padding:0;"><svg style="left:8.8px;top:0.3px" width="19.4" height="11.2" viewBox="0 0 19 10.6"><rect width="19" height="10.6" fill="#fff"/><rect y="0.6" width="19" height="2.4" fill="#38b030"/><rect y="8" width="19" height="2.2" fill="#38b030"/><path d="M6 5.5h7" stroke="#8a9a8a" stroke-width="0.9" stroke-dasharray="1.5 0.8"/></svg></div>
<div class="c b alt" style="left:96.2px;top:143.70px;width:57.7px;height:13.09px;font-size:7.8px;letter-spacing:0.3px;line-height:11px;padding-left:1.6px;">名片</div>
<div class="c  alt" style="left:153.9px;top:143.70px;width:92.8px;height:13.09px;"><span class="m">300g</span>铜版纸名片</div>
<div class="c  alt" style="left:246.7px;top:143.70px;width:36.0px;height:13.09px;"><svg style="left:1px;top:2.4px" width="8" height="8" viewBox="0 0 8 8"><path d="M3.8 0l1.7 1.7l-1.7 1.7l-1.7-1.7z" fill="#e08a10"/><path d="M1.7 3.6l1.7 1.8l-1.7 1.8l-1.7-1.8z" fill="#d8720c"/><path d="M6.1 3.6l1.7 1.8l-1.7 1.8l-1.7-1.8z" fill="#d06c0c"/></svg><span style="position:absolute;left:11.2px;top:1.6px">盒</span></div>
<div class="c m r alt" style="left:282.7px;top:143.70px;width:53.6px;height:13.09px;">0.09 (m)</div>
<div class="c m r alt" style="left:336.3px;top:143.70px;width:53.3px;height:13.09px;">0.06 (m)</div>
<div class="c m yl" style="left:389.6px;top:143.70px;width:38.5px;height:13.09px;">10.00</div>
<div class="c m yl" style="left:428.1px;top:143.70px;width:36.4px;height:13.09px;">11.00</div>
<div class="c m alt" style="left:464.5px;top:143.70px;width:59.8px;height:13.09px;">110.00</div>
<div class="c m alt" style="left:524.3px;top:143.70px;width:38.2px;height:13.09px;">10.00</div>
<div class="c  alt" style="left:562.5px;top:143.70px;width:77.4px;height:13.09px;"></div>
<div class="c m cy" style="left:639.9px;top:143.70px;width:53.6px;height:13.09px;">0.00</div>
<div class="c rn m" style="left:0.0px;top:156.79px;width:14.2px;height:13.09px;">12</div>
<div class="c m" style="left:14.2px;top:156.79px;width:43.5px;height:13.09px;">1051</div>
<div class="c " style="left:57.7px;top:156.79px;width:38.5px;height:13.09px;padding:0;"><svg style="left:8.8px;top:0.3px" width="19.4" height="11.2" viewBox="0 0 19 10.6"><rect width="19" height="10.6" fill="#fff"/><path d="M2 2.5l2-1.5v3z" fill="#38b030"/><path d="M5 2.5h9" stroke="#555" stroke-width="1" stroke-dasharray="2 0.8"/><path d="M6 5.5h6" stroke="#444" stroke-width="0.8" stroke-dasharray="1.2 0.8"/><path d="M2 8.8h14" stroke="#333" stroke-width="1"/></svg></div>
<div class="c b" style="left:96.2px;top:156.79px;width:57.7px;height:13.09px;font-size:7.8px;letter-spacing:0.3px;line-height:11px;padding-left:1.6px;">名片</div>
<div class="c " style="left:153.9px;top:156.79px;width:92.8px;height:13.09px;"><span class="m">300g</span>铜版纸名片</div>
<div class="c " style="left:246.7px;top:156.79px;width:36.0px;height:13.09px;"><svg style="left:1px;top:2.4px" width="8" height="8" viewBox="0 0 8 8"><path d="M3.8 0l1.7 1.7l-1.7 1.7l-1.7-1.7z" fill="#e08a10"/><path d="M1.7 3.6l1.7 1.8l-1.7 1.8l-1.7-1.8z" fill="#d8720c"/><path d="M6.1 3.6l1.7 1.8l-1.7 1.8l-1.7-1.8z" fill="#d06c0c"/></svg><span style="position:absolute;left:11.2px;top:1.6px">盒</span></div>
<div class="c m r" style="left:282.7px;top:156.79px;width:53.6px;height:13.09px;">0.09 (m)</div>
<div class="c m r" style="left:336.3px;top:156.79px;width:53.3px;height:13.09px;">0.06 (m)</div>
<div class="c m yl" style="left:389.6px;top:156.79px;width:38.5px;height:13.09px;">10.00</div>
<div class="c m yl" style="left:428.1px;top:156.79px;width:36.4px;height:13.09px;">11.00</div>
<div class="c m" style="left:464.5px;top:156.79px;width:59.8px;height:13.09px;">110.00</div>
<div class="c m" style="left:524.3px;top:156.79px;width:38.2px;height:13.09px;">10.00</div>
<div class="c " style="left:562.5px;top:156.79px;width:77.4px;height:13.09px;"></div>
<div class="c m cy" style="left:639.9px;top:156.79px;width:53.6px;height:13.09px;">0.00</div>
<div class="a" style="left:0;top:292.7px;width:692.4px;height:13.5px;background:#ececec;border-top:1px solid #b0b0b0;box-sizing:border-box"></div>
<div class="a md" style="left:15.3px;top:294.3px;width:41.7px;height:10.6px;background:#f6f6f6;border:1px solid #b4b4b4;box-sizing:border-box;font-size:7.5px;line-height:8.6px;padding:0 1.2px;overflow:hidden">共12个项目</div>
<div class="a" style="left:13.2px;top:293.7px;width:1px;height:12.4px;background:#c2c2c2"></div>
<div class="a m" style="left:390.1px;top:294.3px;width:37.7px;height:10.6px;background:#f6f6f6;border:1px solid #b4b4b4;box-sizing:border-box;font-size:7.5px;line-height:8.6px;padding:0 1.2px;overflow:hidden">120.00</div>
<div class="a m r" style="left:464.5px;top:294.3px;width:59.0px;height:10.6px;background:#f6f6f6;border:1px solid #b4b4b4;box-sizing:border-box;font-size:7.5px;line-height:8.6px;padding:0 1.2px;overflow:hidden">1320.00</div>
<div class="a m" style="left:639.9px;top:294.3px;width:52.2px;height:10.6px;background:#96f4ff;border:1px solid #b4b4b4;box-sizing:border-box;font-size:7.5px;line-height:8.6px;padding:0 1.2px;overflow:hidden">0.00</div>
</div>
<div class="panel" style="left:33px;top:541.8px;width:246.5px;height:46.2px"></div>
<div class="panel" style="left:285px;top:541.8px;width:441px;height:46.2px"></div>
<div class="panel" style="left:730px;top:541.8px;width:262px;height:46.2px"></div>
<div class="lg" style="left:39px;top:538.2px">本单合计</div>
<div class="lg" style="left:290px;top:538.2px">收款</div>
<div class="lg" style="left:736.5px;top:538.2px">交货</div>
<div class="t md" style="left:40px;top:553px;">总金额</div>
<div class="t m" style="left:75px;top:551px;font-size:7.9px;font-weight:400">1320.00</div>
<div class="t md" style="left:135px;top:553px;">整单折扣(%)</div>
<div class="t m" style="left:180.5px;top:551px;font-size:7.9px;font-weight:400">100.0</div>
<div class="ul" style="left:180px;top:561px;width:91px;background:#8e8e8e"></div>
<div class="t md" style="left:40px;top:569px;">成交金额</div>
<div class="t m" style="left:74.3px;top:567px;color:#1a8ad8;font-size:7.9px;font-weight:400">1320.00</div>
<div class="ul" style="left:73.8px;top:577px;width:56.7px;background:#8e8e8e"></div>
<div class="t md" style="left:135px;top:569px;">优&nbsp;&nbsp;惠</div>
<div class="t m" style="left:180.5px;top:567px;color:#ff0000;font-size:7.9px;font-weight:500">0.00</div>
<div class="ul" style="left:180px;top:577px;width:41px;background:#8e8e8e"></div>
<div class="a" style="left:227px;top:566px;width:45.5px;height:11.6px;border:1px solid #333;box-sizing:border-box;background:#f4f4f4;box-shadow:inset 0 0 0 1px #fff"></div><svg style="left:230px;top:568px" width="7.6" height="7.6" viewBox="0 0 7.6 7.6"><rect width="7.6" height="7.6" fill="#2ea83a" stroke="#1a6a22" stroke-width="0.6"/><text x="3.8" y="6.3" font-size="6.6" font-weight="bold" fill="#fff" text-anchor="middle" font-family="Liberation Sans, sans-serif">$</text></svg><div class="t md" style="left:240.5px;top:567.6px;">取整<span class="m">[F7]</span></div>
<div class="t md" style="left:291px;top:553px;">收款方式</div>
<div class="t md" style="left:325.8px;top:552px;font-size:7.7px">公司现金</div>
<div class="ul" style="left:325px;top:561.3px;width:171px;background:#8e8e8e"></div>
<div class="t md" style="left:291px;top:569px;">收款金额</div>
<div class="t m" style="left:325.8px;top:567px;font-size:7.9px;font-weight:400">0.00</div>
<div class="ul" style="left:325px;top:577px;width:171px;background:#8e8e8e"></div>
<div class="t md" style="left:507px;top:553px;">收款率(%)</div>
<div class="t m" style="left:550px;top:551px;font-size:7.9px;font-weight:400">0.0</div>
<div class="ul" style="left:549px;top:561px;width:169px;background:#8e8e8e"></div>
<div class="t md" style="left:502px;top:569px;">余款支付日期</div>
<div class="a" style="left:549px;top:567px;width:169px;height:12px;background:#ff8000;box-shadow:0 0 0 0.5px #e8dccc"></div><svg style="left:711.5px;top:572.3px" width="4.4" height="2.6" viewBox="0 0 4 2.4"><path d="M0 0h4l-2 2.4z" fill="#111"/></svg>
<div class="t md" style="left:737.5px;top:553px;">交货方式</div>
<div class="ul" style="left:771px;top:561px;width:212px;background:#8e8e8e"></div>
<div class="t md" style="left:737.5px;top:569px;">交货日期</div>
<div class="a" style="left:771px;top:567px;width:144px;height:12px;background:#ff8000;box-shadow:0 0 0 0.5px #e8dccc"></div><div class="t " style="left:850px;top:568.2px;width:55px;text-align:right;font-size:8.1px;color:#000">2016/6/29</div>
<svg style="left:909px;top:572.3px" width="4.4" height="2.6" viewBox="0 0 4 2.4"><path d="M0 0h4l-2 2.4z" fill="#111"/></svg>
<div class="a" style="left:920.5px;top:566.6px;width:63.3px;height:12.4px;background:#f4f4f4;border:1px solid #dcdcdc;box-sizing:border-box"></div><div class="a" style="left:921.5px;top:567.6px;width:52.5px;height:10.4px;background:#ff8000"></div><div class="t m" style="left:922.8px;top:568px;font-size:7.9px;font-weight:400">15:16</div>
<svg style="left:976.2px;top:568.6px" width="5" height="8.6" viewBox="0 0 5 8.6"><path d="M0.5 3l2-2.4l2 2.4z" fill="#2a3a6a"/><path d="M0.5 5.6l2 2.4l2-2.4z" fill="#2a3a6a"/><path d="M0 4.3h5" stroke="#c0c0c0" stroke-width="0.5"/></svg>
<div class="a" style="left:998.8px;top:50px;width:1.2px;height:540px;background:#363c48"></div>
<div class="a" id="status"></div>
<svg style="left:6px;top:592.5px" width="9.5" height="7.5" viewBox="0 0 9.5 7.5"><path d="M0.5 2.2h8M6.4 0.4l2.2 1.8M9 5.3h-8M3.1 7.1L0.9 5.3" fill="none" stroke="#fff" stroke-width="1.1"/></svg><svg style="left:23px;top:592px" width="10" height="8.6" viewBox="0 0 10 8.6"><rect x="0.6" y="4" width="4" height="4" rx="0.8" fill="none" stroke="#f5c21a" stroke-width="1.1"/><rect x="5.4" y="0.6" width="4" height="4" rx="0.8" fill="none" stroke="#f5c21a" stroke-width="1.1"/><path d="M3.4 5.2l3.2-1.8" stroke="#f5c21a" stroke-width="1"/></svg><div class="st y" style="left:35px">网络情况:良好</div>
<svg style="left:104px;top:592px" width="10" height="8.6" viewBox="0 0 10 8.6"><rect x="0.4" y="0.3" width="9.2" height="2.3" rx="0.4" fill="#f5c21a"/><rect x="0.4" y="3.2" width="9.2" height="2.3" rx="0.4" fill="#f5c21a"/><rect x="0.4" y="6.1" width="9.2" height="2.3" rx="0.4" fill="#f5c21a"/></svg><div class="st" style="left:116px;letter-spacing:0.25px">服务器:127.0.0.1:7798</div>
<svg style="left:222.5px;top:592px" width="11.5" height="8.6" viewBox="0 0 11.5 8.6"><ellipse cx="5" cy="2.4" rx="4.6" ry="2" fill="#f5c21a"/><path d="M0.4 3.4v3.2q0 1.8 4.6 1.8t4.6-1.8v-3.2q0 1.8-4.6 1.8t-4.6-1.8z" fill="#f5c21a"/><rect x="7" y="3.6" width="4.2" height="3.4" fill="#2b2f3a"/><path d="M7.6 4.6h3.4M7.6 6h3.4" stroke="#f5c21a" stroke-width="0.8"/></svg><div class="st" style="left:235.8px">账套: 演示账套</div>
<svg style="left:341px;top:592.4px" width="10.5" height="8" viewBox="0 0 10.5 8"><path d="M0.8 4.2l3 3l5.8-6.2" fill="none" stroke="#f5c21a" stroke-width="1.8"/></svg><div class="st y" style="left:355px">正版授权|终身使用</div>
<svg style="left:426px;top:591.6px" width="9.5" height="9" viewBox="0 0 9.5 9"><path d="M4.75 0.3v5M2.4 3.4l2.35 2.4l2.35-2.4" fill="none" stroke="#f5c21a" stroke-width="1.5"/><path d="M0.6 6v2.4h8.3V6" fill="none" stroke="#f5c21a" stroke-width="1.2"/></svg><div class="st" style="left:439px">导入证书</div>
<svg style="left:475px;top:591.4px" width="11" height="9.6" viewBox="0 0 11 9.6"><circle cx="5.5" cy="3" r="2.7" fill="#f5c21a"/><path d="M0.4 9.4q0-3.6 5.1-3.6t5.1 3.6z" fill="#f5c21a"/></svg><div class="st" style="left:489px">在线客服</div>
<svg style="left:526px;top:591px" width="8.4" height="10" viewBox="0 0 8.4 10"><path d="M2 4.4V2.9a2.2 2.2 0 0 1 4.4 0v1.5" fill="none" stroke="#f5c21a" stroke-width="1.2"/><rect x="0.4" y="4.2" width="7.6" height="5.5" rx="0.8" fill="#f5c21a"/><circle cx="4.2" cy="6.6" r="1" fill="#2b2f3a"/></svg><div class="st" style="left:537.5px">锁屏</div>
<svg style="left:894px;top:591px" width="11" height="11" viewBox="0 0 11 11"><circle cx="5.5" cy="5.5" r="4.9" fill="none" stroke="#f5c21a" stroke-width="1"/><circle cx="5.5" cy="4.2" r="1.7" fill="#f5c21a"/><path d="M2.4 8.4q0-2.4 3.1-2.4t3.1 2.4z" fill="#f5c21a"/></svg><div class="st" style="left:907.5px">超级用户</div>
<svg style="left:948.6px;top:592.6px" width="10.5" height="8.6" viewBox="0 0 10.5 8.6"><g transform="rotate(-20 5.25 4.3)"><path d="M1.6 1.6h4.4V0.2l3.8 2.4l-3.8 2.4V3.6H1.6z" fill="#f5c21a"/><path d="M8.9 5h-4.4V3.6L0.7 6l3.8 2.4V7h4.4z" fill="#f5c21a"/></g></svg><div class="st" style="left:961px">切换用户</div>
<div class="a" style="left:8px;top:601.5px;width:13px;height:13px;border-radius:50%;background:#e8ecf0"></div>
</body>
</html>
